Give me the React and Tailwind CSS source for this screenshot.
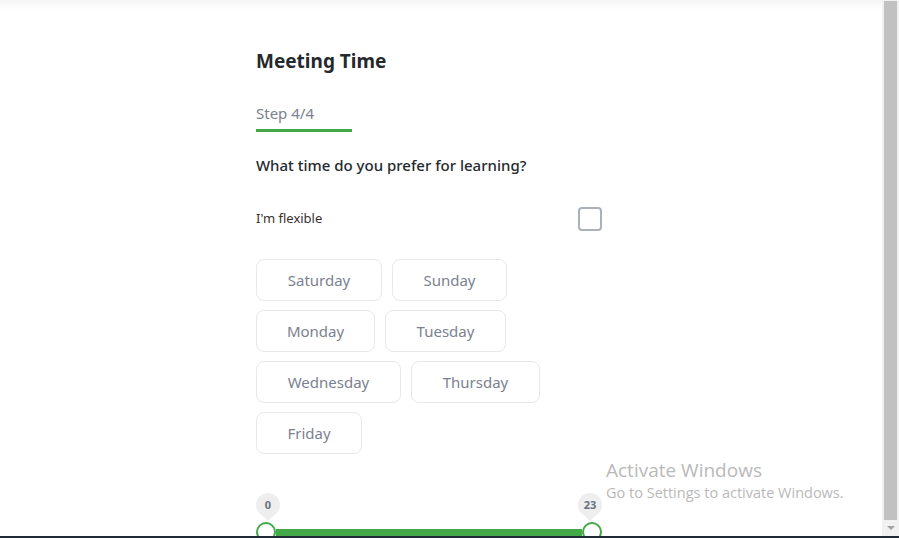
import React from 'react'

const days = [
  [
    { name: 'Saturday', w: 'w-[126px]' },
    { name: 'Sunday', w: 'w-[115px]' },
  ],
  [
    { name: 'Monday', w: 'w-[119px]' },
    { name: 'Tuesday', w: 'w-[121px]' },
  ],
  [
    { name: 'Wednesday', w: 'w-[145px]' },
    { name: 'Thursday', w: 'w-[129px]' },
  ],
  [{ name: 'Friday', w: 'w-[106px]' }],
]

function Tip({ value }) {
  return (
    <div className="relative flex h-[24px] w-[24px] items-center justify-center rounded-full bg-[#eeeeee]">
      <span className="text-[11px] font-bold text-[#6b7280]">{value}</span>
      <div className="absolute -bottom-[4px] left-1/2 h-0 w-0 -translate-x-1/2 border-x-[5px] border-t-[5px] border-x-transparent border-t-[#eeeeee]" />
    </div>
  )
}

export default function App() {
  return (
    <div
      className="relative flex h-[538px] w-[899px] overflow-hidden bg-white"
      style={{ fontFamily: '"Noto Sans", "Open Sans", sans-serif' }}
    >
      <div className="relative flex-1">
        <div className="h-[10px] w-full bg-gradient-to-b from-[#f5f5f5] to-white" />
        <div className="ml-[256px] w-[346px] pt-[38px]">
          <h1 className="text-[19px] font-bold leading-[26px] text-[#24292e]">Meeting Time</h1>

          <div className="mt-[29px] w-[96px]">
            <p className="text-[15px] leading-[20px] text-[#7b8190]">Step 4/4</p>
            <div className="mt-[6px] h-[3px] w-full bg-[#43a847]" />
          </div>

          <p className="mt-[23px] text-[15px] font-medium leading-[20px] text-[#24292e]">
            What time do you prefer for learning?
          </p>

          <div className="mt-[32px] flex items-center justify-between">
            <span className="text-[13px] text-[#3a2f2f]">I'm flexible</span>
            <div className="h-[24px] w-[24px] rounded-[4px] border-2 border-[#aab1ba]" />
          </div>

          <div className="mt-[28px] flex flex-col gap-[9px]">
            {days.map((row, i) => (
              <div key={i} className="flex gap-[10px]">
                {row.map((d) => (
                  <div
                    key={d.name}
                    className={`flex h-[42px] items-center justify-center rounded-[8px] border border-[#e8e8ea] text-[15px] text-[#7b8190] ${d.w}`}
                  >
                    {d.name}
                  </div>
                ))}
              </div>
            ))}
          </div>

          <div className="mt-[39px] flex justify-between">
            <Tip value="0" />
            <Tip value="23" />
          </div>
          <div className="mt-[5px] flex items-start">
            <div className="h-[20px] w-[20px] rounded-full border-2 border-[#43a847] bg-white" />
            <div className="mt-[7px] h-[8px] flex-1 bg-[#43a847]" />
            <div className="h-[20px] w-[20px] rounded-full border-2 border-[#43a847] bg-white" />
          </div>
        </div>

        <div className="absolute left-[606px] top-[458px] text-[#b9b9b9]" style={{ fontFamily: '"Open Sans", sans-serif' }}>
          <p className="text-[19px] leading-[25px]">Activate Windows</p>
          <p className="text-[14.5px] leading-[20px]">Go to Settings to activate Windows.</p>
        </div>
      </div>

      <div className="flex w-[17px] flex-col items-center bg-[#f1f1f1]">
        <div className="mt-[1px] h-[519px] w-[13px] bg-[#c1c1c1]" />
        <div className="mt-[6px] h-0 w-0 border-x-[4px] border-t-[4px] border-x-transparent border-t-[#a3a3a3]" />
      </div>

      <div className="absolute bottom-0 left-0 h-[2px] w-full bg-[#1f2a36]" />
    </div>
  )
}
